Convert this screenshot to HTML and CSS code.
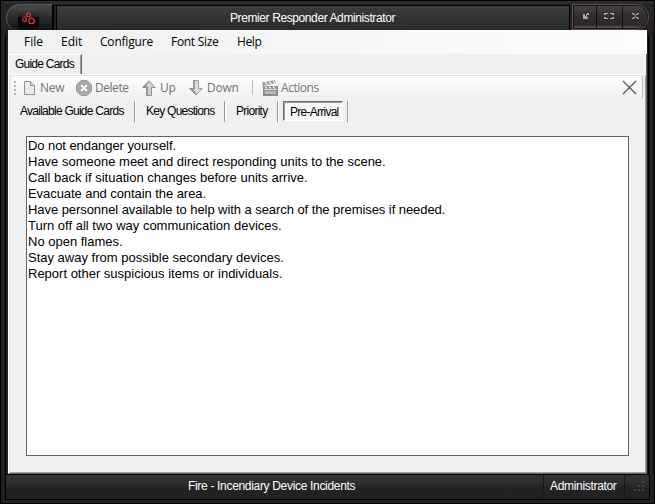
FILE: index.html
```
<!DOCTYPE html>
<html lang="en">
<head>
<meta charset="utf-8">
<title>Premier Responder Administrator</title>
<link rel="stylesheet" href="styles.css">
</head>
<body>
<div class="window">
  <header class="titlebar">
    <div class="orb">
      <svg class="logo" width="21" height="21" viewBox="0 0 21 21">
        <defs><linearGradient id="lg" x1="0" y1="0" x2="0" y2="1"><stop offset="0" stop-color="#4a4a4a"/><stop offset=".42" stop-color="#202020"/><stop offset=".46" stop-color="#050505"/><stop offset="1" stop-color="#0a0a0a"/></linearGradient></defs>
        <rect width="21" height="21" rx="3" fill="url(#lg)"/>
        <g fill="none" stroke="#d93434" stroke-width="1.200"><circle cx="10.500" cy="7" r="2"/><circle cx="6.500" cy="11.500" r="2"/><circle cx="13.500" cy="13" r="2.700"/><path d="M10.500 4v1M8 8.500l-1 1M6.500 13.500v1M4 11.500h1M13.500 9.500v1M10 13h1M16 13h1.500M12 15l-.8 1M15 15l.8 1"/></g>
      </svg>
    </div>
    <h1 class="caption">Premier Responder Administrator</h1>
    <div class="controls">
      <span class="ctl"><svg width="6" height="6" shape-rendering="crispEdges"><path d="M4 0h2v2H4zM0 1h2v5H0zM3 1h1v2H3zM2 3h2v1H2zM2 4h3v2H2z" fill="#a3a5ab"/></svg></span>
      <span class="ctl"><svg width="10" height="6" shape-rendering="crispEdges"><path d="M0 0h4v1H2v1H0zM6 0h4v2H8V1H6zM0 4h2v1h2v1H0zM8 4h2v2H6V5h2z" fill="#a3a5ab"/></svg></span>
      <span class="ctl"><svg width="7" height="6" shape-rendering="crispEdges"><path d="M0 0h2v1h1v1H1V1H0zM5 0h2v1H6v1H4V1h1zM3 2h1v2H3zM1 4h2v1H2v1H0V5h1zM4 4h2v1h1v1H5V5H4z" fill="#a3a5ab"/></svg></span>
    </div>
  </header>

  <div class="middle">
    <div class="edge left"></div>
    <main class="client">
      <nav class="menu">
        <span class="m-file">File</span><span class="m-edit">Edit</span><span class="m-conf">Configure</span><span class="m-font">Font Size</span><span class="m-help">Help</span>
      </nav>
      <div class="panel">
        <div class="tabs"><span class="tab">Guide Cards</span></div>
        <div class="toolbar">
          <span class="grip"></span>
          <svg class="i-new" width="11" height="14"><path d="M.5.500h6l4 4v9H.500z" fill="#eaeaea" stroke="#8f8f8f"/><path d="M6.500.500v4h4" fill="#ddd" stroke="#8f8f8f"/></svg>
          <span class="l-new">New</span>
          <svg class="i-del" width="16" height="16"><path d="M5 .5h6L15.500 5v6L11 15.500H5L.5 11V5z" fill="#aaa" stroke="#979797" stroke-linejoin="round"/><path d="M5.200 5.200l5.600 5.600M10.800 5.200l-5.600 5.600" stroke="#fff" stroke-width="1.900"/></svg>
          <span class="l-del">Delete</span>
          <svg class="i-up" width="14" height="16"><path d="M7 .9l6.300 6.600h-3.800v8h-5v-8H.7z" fill="#d2d2d2" stroke="#929292"/><path d="M7 1L.7 7.500H4.500v8h1.300v-9H4z" fill="#909090"/></svg>
          <span class="l-up">Up</span>
          <svg class="i-down" width="14" height="16"><path d="M4.500.500h5v8h3.800L7 15.100.7 8.500h3.800z" fill="#dcdcdc" stroke="#9a9a9a"/><path d="M4.500.500h1.300v9H4l3 3.500v2L.7 8.500h3.800z" fill="#929292"/></svg>
          <span class="l-down">Down</span>
          <span class="tsep"></span>
          <svg class="i-act" width="16" height="16"><path d="M0 2.500L13 0l1 3L1 6z" fill="#999"/><path d="M3 2l2.500 2.500M7 1.200l2.500 2.500M11 .5L13 3" stroke="#eee" stroke-width="1.300"/><path d="M1 6h15v10H1z" fill="#8d8d8d"/><path d="M3 6.500l2 2M7 6.500l2 2M11 6.500l2 2" stroke="#eee" stroke-width="1.300"/><path d="M2 9.500h13" stroke="#e0e0e0"/><path d="M3 11h11v3H3z" fill="#b8b8b8"/></svg>
          <span class="l-act">Actions</span>
          <svg class="i-close" width="15" height="15"><path d="M1 1l13 13M14 1L1 14" stroke="#555" stroke-width="1.300"/></svg>
        </div>
        <div class="subtabs">
          <span class="sub s1">Available Guide Cards</span>
          <span class="sub s2">Key Questions</span>
          <span class="sub s3">Priority</span>
          <span class="sub s4"><span class="pressed">Pre-Arrival</span></span>
        </div>
        <div class="textbox">
          <p class="r1">Do not endanger yourself.</p>
          <p>Have someone meet and direct responding units to the scene.</p>
          <p>Call back if situation changes before units arrive.</p>
          <p class="r1">Evacuate and contain the area.</p>
          <p class="r1">Have personnel available to help with a search of the premises if needed.</p>
          <p>Turn off all two way communication devices.</p>
          <p>No open flames.</p>
          <p>Stay away from possible secondary devices.</p>
          <p>Report other suspicious items or individuals.</p>
        </div>
      </div>
    </main>
    <div class="edge right"></div>
  </div>

  <footer class="status">
    <div class="status-main">Fire - Incendiary Device Incidents</div>
    <div class="status-user">Administrator</div>
    <div class="status-grip"><svg width="11" height="11"><path d="M8 0h2v2H8zM4 4h2v2H4zM8 4h2v2H8zM0 8h2v2H0zM4 8h2v2H4zM8 8h2v2H8z" fill="#454545"/></svg></div>
  </footer>
</div>
</body>
</html>
```
FILE: styles.css
```
* { box-sizing: border-box; }
body { margin: 0; font: 12px/16px "Liberation Sans", Arial, sans-serif; color: #000; white-space: nowrap; }
svg { display: block; flex: none; }
.window { width: 655px; height: 504px; background: #202020; border: 1px solid #000; display: flex; flex-direction: column; }

.titlebar { height: 29px; display: flex; padding: 3px 4px 0 5px; background: linear-gradient(#2b2b2b 0 3px, #232323 3px); }
.orb { width: 48px; height: 26px; border: 1px solid #5a5a5a; border-right: 2px solid #000; border-bottom: 0; border-radius: 15px 0 0 13px; background: linear-gradient(#484848, #262626 60%, #141414); padding: 3px 0 0 11px; }
.caption { margin: 1px 0 0 2px; width: 514px; height: 25px; border: 1px solid #000; border-bottom: 0; background: linear-gradient(#3d3d3d, #292929); font-size: 12px; font-weight: 400; line-height: 25px; letter-spacing: -.4px; color: #fff; padding-left: 173px; }
.controls { margin-left: 2px; width: 77px; height: 26px; display: flex; border: 1px solid #555; border-radius: 0 14px 14px 0; background: #2a0808; padding: 1px; gap: 1px; overflow: hidden; }
.ctl { width: 22px; flex: none; background: linear-gradient(#4b4242, #342f30 40%, #2c2829 85%, #5b5657); display: flex; padding: 7px 0 0 9px; }
.ctl:nth-child(2) { width: 25px; padding-left: 7px; }
.ctl:last-child { flex: 1; border-radius: 0 12px 12px 0; padding-left: 9px; }

.middle { height: 444px; display: flex; }
.edge { width: 7px; background: linear-gradient(90deg, #181818 0 1px, #2b2728 1px 3px, #171717 3px 4px, #000 4px 5px, #222 5px); margin-top: 5px; }
.right { background: linear-gradient(90deg, #222 0 1px, #000 1px 2px, #171717 2px 3px, #2b2728 3px 5px, #181818 5px); }
.client { width: 639px; background: #f0f0f0; display: flex; flex-direction: column; }
.menu { height: 24px; background: linear-gradient(90deg, #f0f0f0, #fdfdfd); display: flex; font-family: "Open Sans", "Noto Sans", sans-serif; font-size: 12px; line-height: 24px; padding-left: 16px; }
.menu span { flex: none; }
.m-conf { letter-spacing: -.2px; }
.m-font { letter-spacing: -.3px; }
.m-file { width: 37px; }
.m-edit { width: 39px; }
.m-conf { width: 71px; }
.m-font { width: 66px; }
.m-help { letter-spacing: -.4px; }
.panel { flex: 1; border-left: 1px solid #fff; border-right: 1px solid #696969; border-bottom: 1px solid #696969; box-shadow: inset 1px 0 #e3e3e3, inset -1px -1px #a0a0a0; }
.tabs { height: 21px; border-bottom: 1px solid #fff; padding-left: 1px; background: #f0f0f0; box-shadow: 0 1px #e2e2e2; }
.tab { display: block; width: 72px; height: 20px; border-top: 1px solid #fff; border-right: 1px solid #696969; box-shadow: inset -1px 0 #a0a0a0; padding: 1px 0 0 5px; letter-spacing: -.77px; }
.toolbar { height: 23px; margin: 1px 3px 0; border-radius: 3px; border-right: 1px solid #bbb; background: linear-gradient(#fdfdfd, #f0f0f0); display: flex; align-items: center; font: 12px/20px "Open Sans", "Noto Sans", sans-serif; letter-spacing: -.45px; color: #757575; }
.toolbar > span { flex: none; }
.grip { width: 2px; height: 14px; margin: 0 8px 0 2px; background: repeating-linear-gradient(#b4b4b4 0 2px, transparent 2px 4px); }
.l-new { width: 36px; margin-left: 5px; }
.l-del { width: 47px; margin-left: 3px; }
.l-up { width: 29px; margin-left: 4px; }
.l-down { width: 45px; margin-left: 4px; letter-spacing: -.2px; }
.toolbar .l-new, .toolbar .l-up { letter-spacing: -.3px; }
.tsep { width: 1px; height: 15px; background: #bbb; margin-right: 9px; }
.l-act { margin-left: 3px; }
.i-close { margin: 0 5px 0 auto; }

.subtabs { height: 24px; display: flex; padding: 2px 0 0 2px; letter-spacing: -.74px; }
.sub { height: 21px; border-right: 1px solid #999; box-shadow: 1px 0 #fff; line-height: 20px; padding-left: 9px; }
.s1 { width: 124px; }
.s2, .s3 { padding-left: 11px; }
.s2 { width: 90px; }
.s3 { width: 53px; }
.s4 { width: 70px; padding-left: 5px; }
.pressed { display: block; width: 60px; height: 20px; border: 1px solid #696969; border-right-color: #fff; border-bottom-color: #fff; box-shadow: inset 1px 1px #a0a0a0; background: repeating-conic-gradient(#fff 0 25%, #f0f0f0 0 50%) 0 0 / 2px 2px; padding-left: 6px; }

.textbox { width: 603px; height: 320px; margin: 13px 0 0 17px; background: #fff; border: 1px solid #646464; padding: 1px 0 0 1px; font-size: 13px; line-height: 16px; }
.textbox p { margin: 0; }
.textbox .r1 { letter-spacing: -.065px; }

.status { height: 26px; margin: 0 4px; border: 1px solid #000; display: flex; color: #fff; line-height: 23px; letter-spacing: -.32px; background: linear-gradient(#343434, #2c2c2c 40%, #232323 55%, #212121); }
.status-main { width: 538px; padding-left: 182px; border-right: 1px solid #1a1a1a; }
.status-user { width: 81px; padding-left: 6px; border-right: 1px solid #1a1a1a; }
.status-grip { padding: 6px 0 0 9px; }
```
